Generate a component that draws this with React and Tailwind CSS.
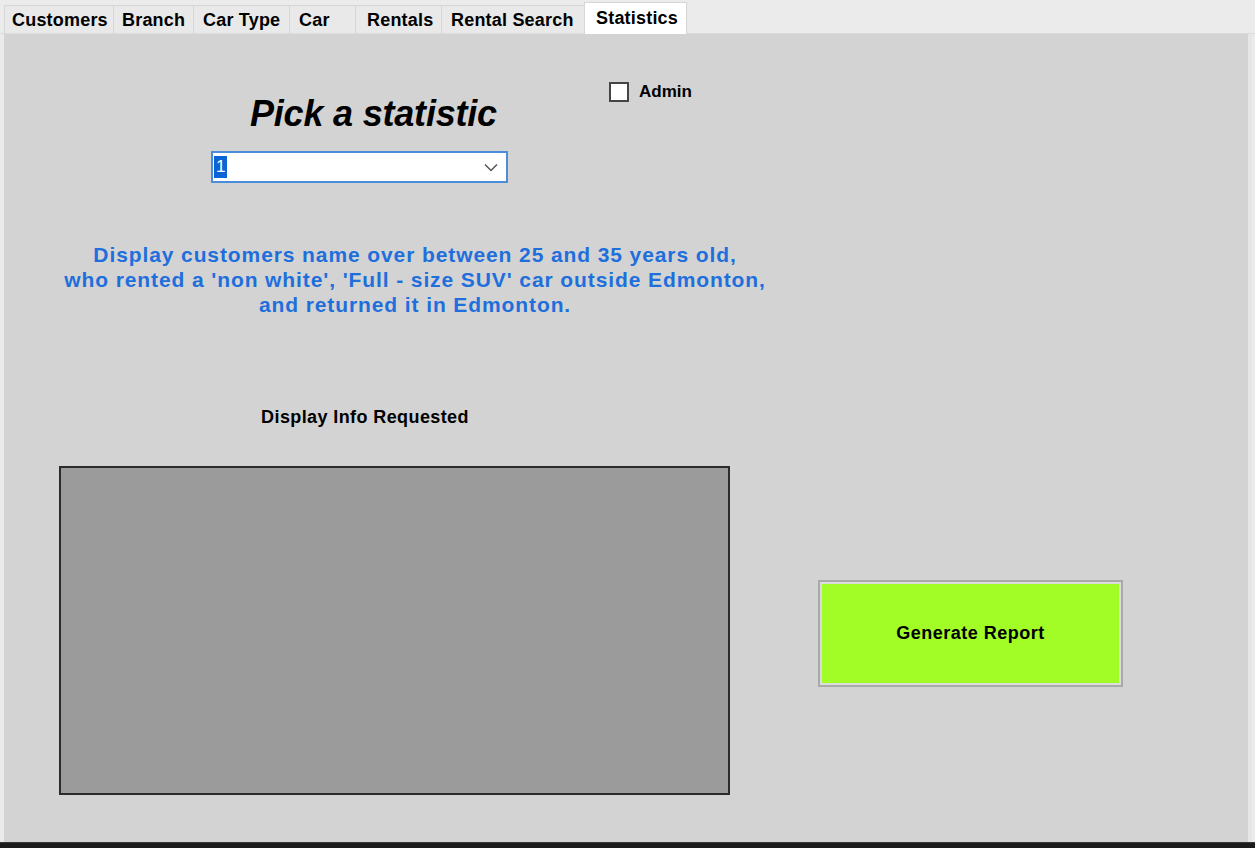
import React from 'react';

const tabs = [
  { label: 'Customers', w: 'w-[109px]', pl: 'pl-[7px]' },
  { label: 'Branch', w: 'w-[80px]', pl: 'pl-[8px]' },
  { label: 'Car Type', w: 'w-[96px]', pl: 'pl-[9px]' },
  { label: 'Car', w: 'w-[66px]', pl: 'pl-[9px]' },
  { label: 'Rentals', w: 'w-[86px]', pl: 'pl-[11px]' },
  { label: 'Rental Search', w: 'w-[143px]', pl: 'pl-[9px]' },
];

const App = () => {
  return (
    <div className="w-[1255px] h-[848px] bg-[#ebebeb] flex flex-col overflow-hidden font-['Liberation_Sans',Arial,sans-serif] text-black">
      {/* tab strip */}
      <div className="h-[34px] flex items-end pl-[4px] border-b border-[#dcdcdc]">
        {tabs.map((t) => (
          <div
            key={t.label}
            className={`${t.w} ${t.pl} h-[28px] flex items-center bg-[#e9e9e9] border-t border-l border-[#d6d6d6] text-[18px] font-bold tracking-[0.2px] leading-none`}
          >
            {t.label}
          </div>
        ))}
        <div className="w-[103px] h-[32px] pl-[11px] pt-[6px] bg-white border-x border-t border-[#d6d6d6] text-[18px] font-bold tracking-[0.2px] leading-none -mb-px relative">
          Statistics
        </div>
      </div>

      {/* panel */}
      <div className="flex-1 ml-[4px] mr-[3px] bg-[#d3d3d3] border-r-[4px] border-[#e6e6e6] flex flex-col">
        <div className="flex items-start mt-[45px]">
          <div className="ml-[207px] w-[297px] flex flex-col">
            <div className="mt-[15px] ml-[39px] text-[36px] leading-[40px] font-bold italic tracking-[-0.2px]">
              Pick a statistic
            </div>
            <div className="mt-[17px] h-[32px] bg-white border-2 border-[#4b8ddb] flex items-center pl-[1px] pr-[8px]">
              <span className="bg-[#0a64d6] text-white text-[17px] leading-[22px] px-[2px]">1</span>
              <div className="flex-1" />
              <svg width="14" height="9" viewBox="0 0 14 9" fill="none">
                <path d="M1 1.5 L7 7.5 L13 1.5" stroke="#555" strokeWidth="1.5" />
              </svg>
            </div>
          </div>
          <div className="ml-[101px] flex items-center">
            <div className="w-[20px] h-[20px] bg-white border-2 border-[#444]" />
            <span className="ml-[10px] text-[17px] font-bold">Admin</span>
          </div>
        </div>

        <div className="mt-[59px] w-[822px] text-center text-[21px] leading-[25px] font-bold text-[#1e6fdc] tracking-[0.9px]">
          <div>Display customers name over between 25 and 35 years old,</div>
          <div>who rented a 'non white', 'Full - size SUV' car outside Edmonton,</div>
          <div>and returned it in Edmonton.</div>
        </div>

        <div className="mt-[90px] w-[722px] text-center text-[18px] leading-[20px] font-bold tracking-[0.4px]">
          Display Info Requested
        </div>

        <div className="mt-[39px] flex items-start">
          <div className="ml-[55px] w-[671px] h-[329px] bg-[#9b9b9b] border-2 border-[#2b2b2b]" />
          <div className="ml-[88px] mt-[114px] w-[305px] h-[107px] border-2 border-[#a9a9a9] bg-[#dcdcdc] p-[2px]">
            <div className="w-full h-full bg-[#a2fd27] flex items-center justify-center text-[18px] font-bold tracking-[0.5px]">
              Generate Report
            </div>
          </div>
        </div>
      </div>

      {/* edge of the window below */}
      <div className="h-[6px] bg-[#1c1c1c] border-t border-[#3a3a3a]" />
    </div>
  );
};

export default App;
